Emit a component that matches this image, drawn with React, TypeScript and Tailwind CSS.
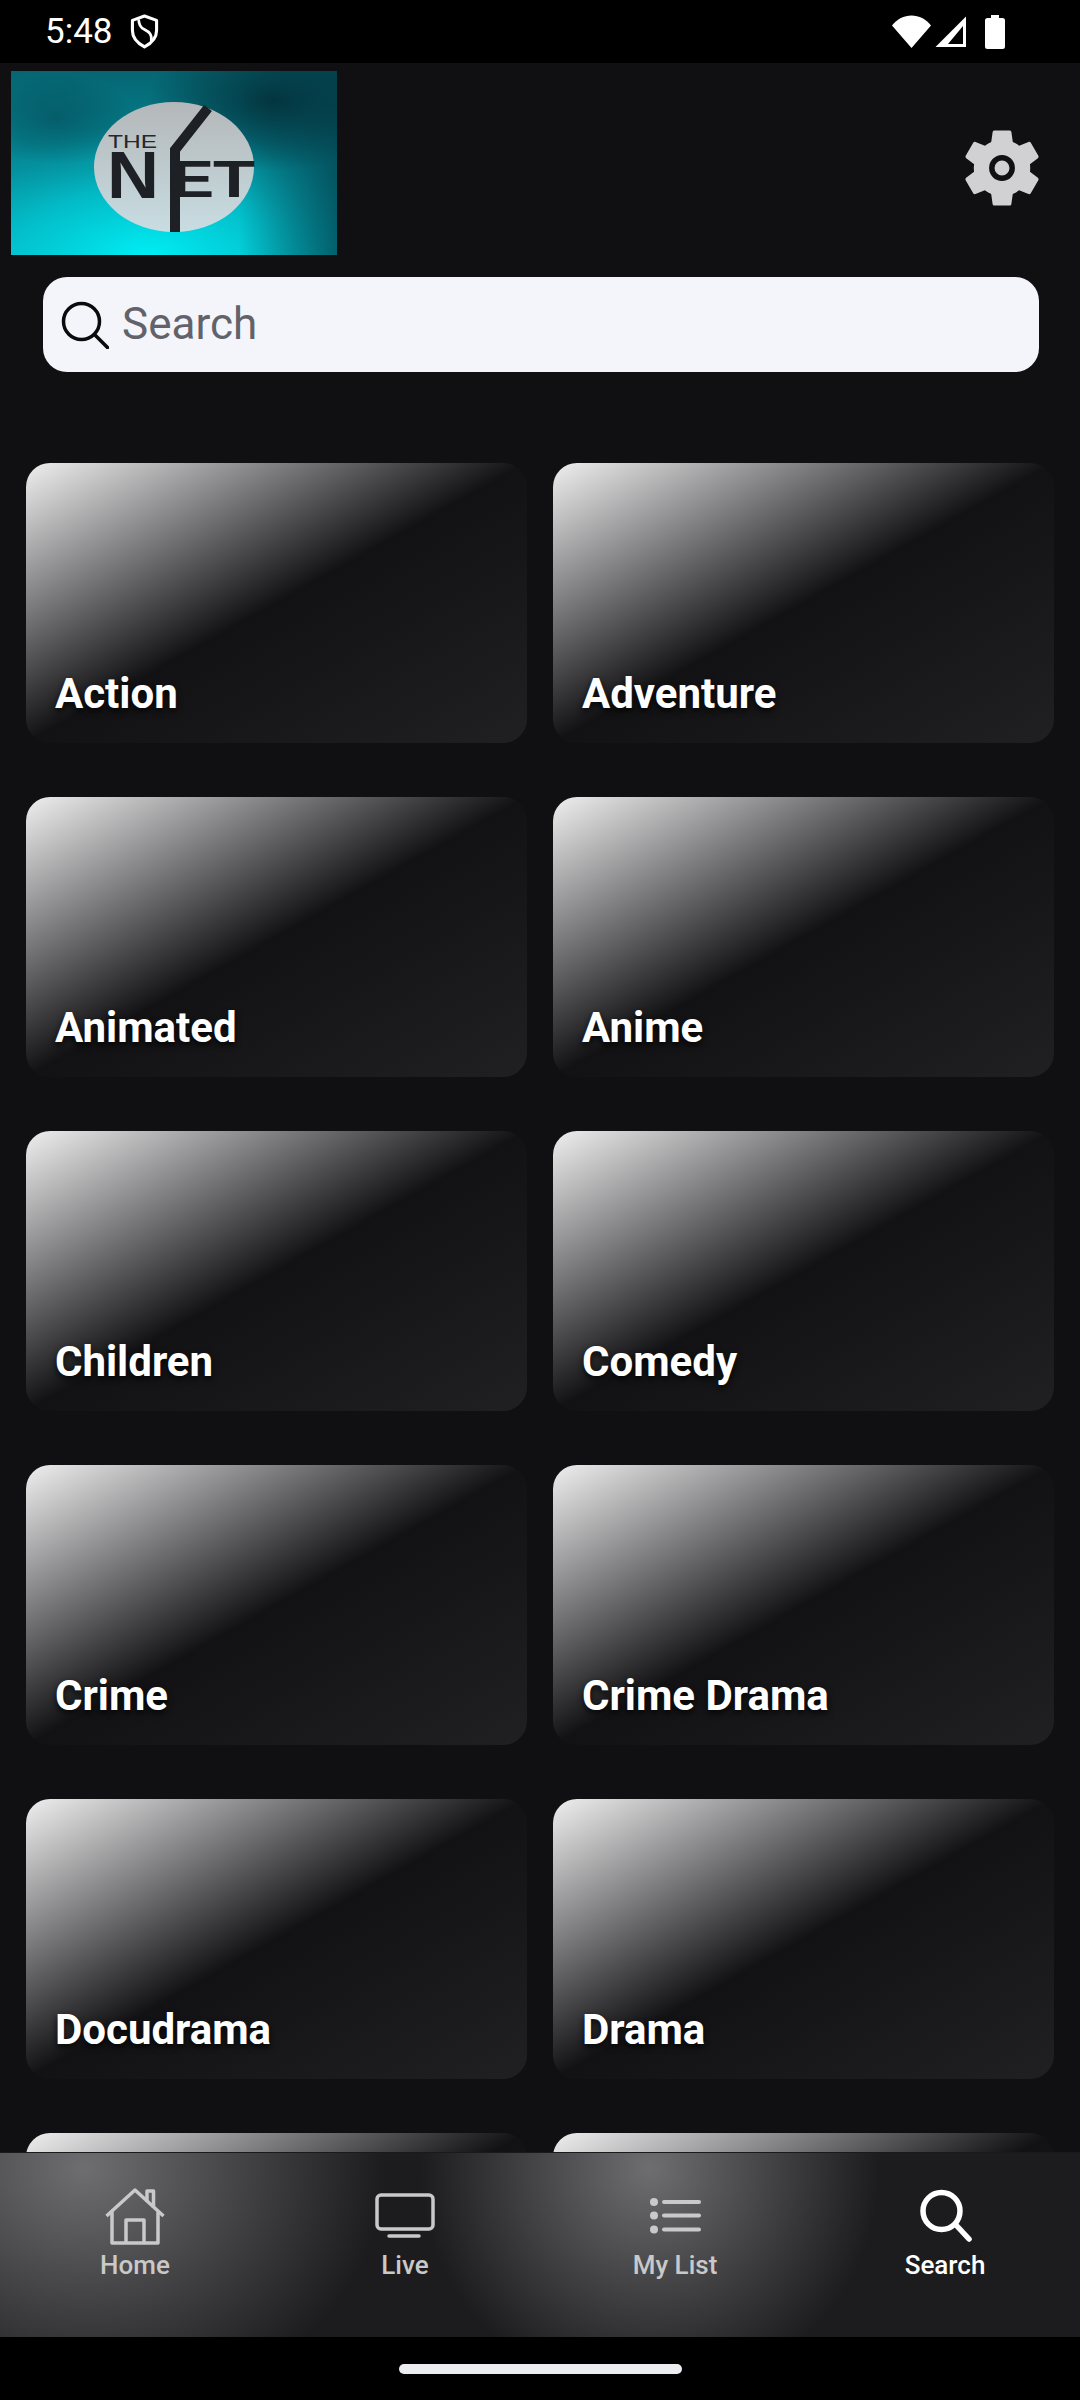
// last two cards sit under the nav, their labels can't be read
const genres = ["Action", "Adventure", "Animated", "Anime", "Children", "Comedy", "Crime", "Crime Drama", "Docudrama", "Drama", "", ""];

const Logo = () => (
    <svg viewBox="0 0 326 184" className="w-[326px] h-[184px] block">
        <defs>
            <linearGradient id="sky" x1="0" y1="0" x2="0" y2="1">
                <stop offset="0" stopColor="#056672" />
                <stop offset="0.55" stopColor="#058c9a" />
                <stop offset="1" stopColor="#03c4d0" />
            </linearGradient>
            <radialGradient id="glow" cx="0.42" cy="1.02" r="0.72">
                <stop offset="0" stopColor="#00f0f6" />
                <stop offset="0.55" stopColor="#02c8d3" stopOpacity="0.65" />
                <stop offset="1" stopColor="#02a0ac" stopOpacity="0" />
            </radialGradient>
            <radialGradient id="shade" cx="0.5" cy="0.5" r="0.5">
                <stop offset="0" stopColor="#03303a" stopOpacity="0.9" />
                <stop offset="0.6" stopColor="#03303a" stopOpacity="0.4" />
                <stop offset="1" stopColor="#03303a" stopOpacity="0" />
            </radialGradient>
            <linearGradient id="edge" x1="0" y1="0" x2="1" y2="0">
                <stop offset="0.7" stopColor="#03414d" stopOpacity="0" />
                <stop offset="1" stopColor="#03414d" stopOpacity="0.75" />
            </linearGradient>
            <linearGradient id="ball" x1="0" y1="0" x2="0" y2="1">
                <stop offset="0" stopColor="#b4b7b9" />
                <stop offset="1" stopColor="#c8dde2" />
            </linearGradient>
        </defs>
        <rect width="326" height="184" fill="url(#sky)" />
        <rect width="326" height="184" fill="url(#glow)" />
        <rect width="326" height="184" fill="url(#edge)" />
        <ellipse cx="45" cy="48" rx="80" ry="46" fill="url(#shade)" opacity="0.4" />
        <ellipse cx="262" cy="30" rx="125" ry="70" fill="url(#shade)" />
        <ellipse cx="163" cy="96" rx="80" ry="65" fill="url(#ball)" />
        <text x="97" y="77" fontFamily="Liberation Sans, sans-serif" fontSize="18.500" fill="#23282c" textLength="49" lengthAdjust="spacingAndGlyphs">THE</text>
        <text x="96" y="127" fontFamily="Liberation Sans, sans-serif" fontWeight="700" fontSize="66" fill="#1d2024" textLength="52" lengthAdjust="spacingAndGlyphs">N</text>
        <text x="161" y="126" fontFamily="Liberation Sans, sans-serif" fontWeight="700" fontSize="52" fill="#1d2024" textLength="42" lengthAdjust="spacingAndGlyphs">E</text>
        <text x="202" y="126" fontFamily="Liberation Sans, sans-serif" fontWeight="700" fontSize="52" fill="#1d2024" textLength="42" lengthAdjust="spacingAndGlyphs">T</text>
        <path d="M164 161V79L197 37" fill="none" stroke="#1d2024" strokeWidth="10" />
    </svg>
);

const SettingsIcon = () => (
    <svg viewBox="0 0 24 24" className="w-[94px] h-[94px]">
        <path fill="#d1d1d3" d="M19.14 12.94c.04-.3.06-.61.06-.94 0-.32-.02-.64-.07-.94l2.03-1.58c.18-.14.23-.41.12-.61l-1.92-3.32c-.12-.22-.37-.29-.59-.22l-2.39.96c-.5-.38-1.03-.7-1.62-.94l-.36-2.54c-.04-.24-.24-.41-.48-.41h-3.84c-.24 0-.43.17-.47.41l-.36 2.54c-.59.24-1.13.57-1.62.94l-2.39-.96c-.22-.08-.47 0-.59.22L2.74 8.87c-.12.21-.08.47.12.61l2.03 1.58c-.05.3-.09.63-.09.94s.02.64.07.94l-2.03 1.58c-.18.14-.23.41-.12.61l1.92 3.32c.12.22.37.29.59.22l2.39-.96c.5.38 1.03.7 1.62.94l.36 2.54c.05.24.24.41.48.41h3.84c.24 0 .44-.17.47-.41l.36-2.54c.59-.24 1.13-.56 1.62-.94l2.39.96c.22.08.47 0 .59-.22l1.92-3.32c.12-.22.07-.47-.12-.61l-2.01-1.58z" />
        <circle cx="12" cy="12" r="2.600" fill="#d1d1d3" stroke="#111113" strokeWidth="1.400" />
    </svg>
);

const StatusBar = () => (
    <div className="h-[63px] bg-black flex items-center justify-between pl-[45px] pr-[75px] text-white shrink-0">
        <div className="flex items-center gap-[17px]">
            <span className="text-[35px] leading-none">5:48</span>
            <svg viewBox="0 0 30 36" className="w-[29px] h-[35px]">
                <path d="M15 2 27.5 6.5V17c0 8-5 13-12.5 17C7.5 30 2.500 25 2.500 17V6.500z" fill="none" stroke="#fff" strokeWidth="3.200" strokeLinejoin="round" />
                <path d="M9 5.500c0 6 2 8.500 6 10.500 5 2.500 8 5 7 12" fill="none" stroke="#fff" strokeWidth="2.800" />
            </svg>
        </div>
        <div className="flex items-center">
            <svg viewBox="0 0 39 33" className="w-[39px] h-[33px] mr-[3px]">
                <path d="M0 10.500C5 4 12 .5 19.500 .5S34 4 39 10.500L19.500 33z" fill="#fff" />
            </svg>
            <svg viewBox="0 0 33 33" className="w-[33px] h-[33px] mr-[18px]">
                <path d="M32 1.500V32H1.500z M14 29h15V11z" fill="#fff" fillRule="evenodd" />
            </svg>
            <svg viewBox="0 0 20 34" className="w-[20px] h-[34px]">
                <path d="M6 0h8v3h3.500A2.500 2.500 0 0 1 20 5.500V31.500A2.500 2.500 0 0 1 17.500 34H2.500A2.500 2.500 0 0 1 0 31.500V5.500A2.500 2.500 0 0 1 2.500 3H6z" fill="#fff" />
            </svg>
        </div>
    </div>
);

const SearchBar = () => (
    <div className="mt-[22px] ml-[43px] mr-[41px] h-[95px] rounded-[24px] bg-[#f4f5fa] flex items-center pl-[18px] gap-[13px] shrink-0">
        <svg viewBox="0 0 48 48" className="w-[48px] h-[48px]" fill="none" stroke="#0b0b0d" strokeWidth="3.500" strokeLinecap="round">
            <circle cx="20.500" cy="20.500" r="18" />
            <path d="M33.500 33.500 46.500 46.500" />
        </svg>
        <span className="text-[44px] text-[#62626b] leading-none pb-[2px]">Search</span>
    </div>
);

const GenreCard = ({ title }: { title: string }) => (
    <div className="h-[280px] rounded-[24px] bg-[linear-gradient(to_bottom_right,#efeff0_0%,#121214_50%,#202022_100%)] flex items-end pl-[29px] pb-[25px]">
        <span className="text-[42px] leading-[48px] font-bold text-white [text-shadow:0_3px_6px_rgba(0,0,0,0.85)]">{title}</span>
    </div>
);

const tabClass = "flex flex-col items-center justify-start pt-[35px] text-[26px] leading-[30px] font-medium";

const BottomNav = () => (
    <div className="h-[185px] shrink-0 border-t border-[#1a1a1c] grid grid-cols-4 bg-[#1c1c1e] bg-[radial-gradient(ellipse_300px_250px_at_85px_15px,#6e6e70_0%,transparent_100%),radial-gradient(ellipse_230px_230px_at_650px_15px,#6e6e70_0%,transparent_100%)]">
        <div className={`${tabClass} text-[#c9c9c9]`}>
            <svg viewBox="0 0 60 58" className="w-[60px] h-[58px]" fill="none" stroke="#c9c9c9" strokeWidth="3.500" strokeLinejoin="round">
                <path d="M1.500 28 30 2 58.500 28" />
                <path d="M7 24V55H53V24" />
                <path d="M21 55V32H39V55" />
                <path d="M42 14V3H48.500V20" />
            </svg>
            <span className="mt-[4px]">Home</span>
        </div>
        <div className={`${tabClass} text-[#c9c9c9]`}>
            <svg viewBox="0 0 60 58" className="w-[60px] h-[58px]" fill="none" stroke="#c9c9c9" strokeWidth="3.500" strokeLinecap="round">
                <rect x="2" y="7" width="56" height="34" rx="4" />
                <path d="M14 48H44" />
            </svg>
            <span className="mt-[4px]">Live</span>
        </div>
        <div className={`${tabClass} text-[#c9c9c9]`}>
            <svg viewBox="0 0 60 58" className="w-[60px] h-[58px]" fill="#c9c9c9">
                <circle cx="9" cy="14" r="4" />
                <circle cx="9" cy="27.500" r="4" />
                <circle cx="9" cy="41.500" r="4" />
                <rect x="17" y="12" width="39" height="4" rx="2" />
                <rect x="17" y="25.500" width="39" height="4" rx="2" />
                <rect x="17" y="39.500" width="39" height="4" rx="2" />
            </svg>
            <span className="mt-[4px]">My List</span>
        </div>
        <div className={`${tabClass} text-white`}>
            <svg viewBox="0 0 60 58" className="w-[60px] h-[58px]" fill="none" stroke="#fff" strokeWidth="5.500" strokeLinecap="round">
                <circle cx="26.500" cy="23" r="18.500" />
                <path d="M41 37 54 51" />
            </svg>
            <span className="mt-[4px]">Search</span>
        </div>
    </div>
);

export default function App() {
    return (
        <div className="w-[1080px] h-[2400px] flex flex-col overflow-hidden bg-[#101012] font-['Roboto',sans-serif]">
            <StatusBar />
            <div className="flex-1 min-h-0 overflow-hidden flex flex-col">
                <div className="flex justify-between items-start pt-[8px] pl-[11px] pr-[31px] shrink-0">
                    <Logo />
                    <div className="mt-[50px]"><SettingsIcon /></div>
                </div>
                <SearchBar />
                <div className="mt-[91px] pl-[26px] pr-[26px] grid grid-cols-2 gap-x-[26px] gap-y-[54px]">
                    {genres.map((genre, i) => (
                        <GenreCard key={i} title={genre} />
                    ))}
                </div>
            </div>
            <BottomNav />
            <div className="h-[63px] bg-black shrink-0 flex justify-center pt-[27px]">
                <div className="w-[283px] h-[10px] rounded-full bg-[#ecedf0]" />
            </div>
        </div>
    );
}
